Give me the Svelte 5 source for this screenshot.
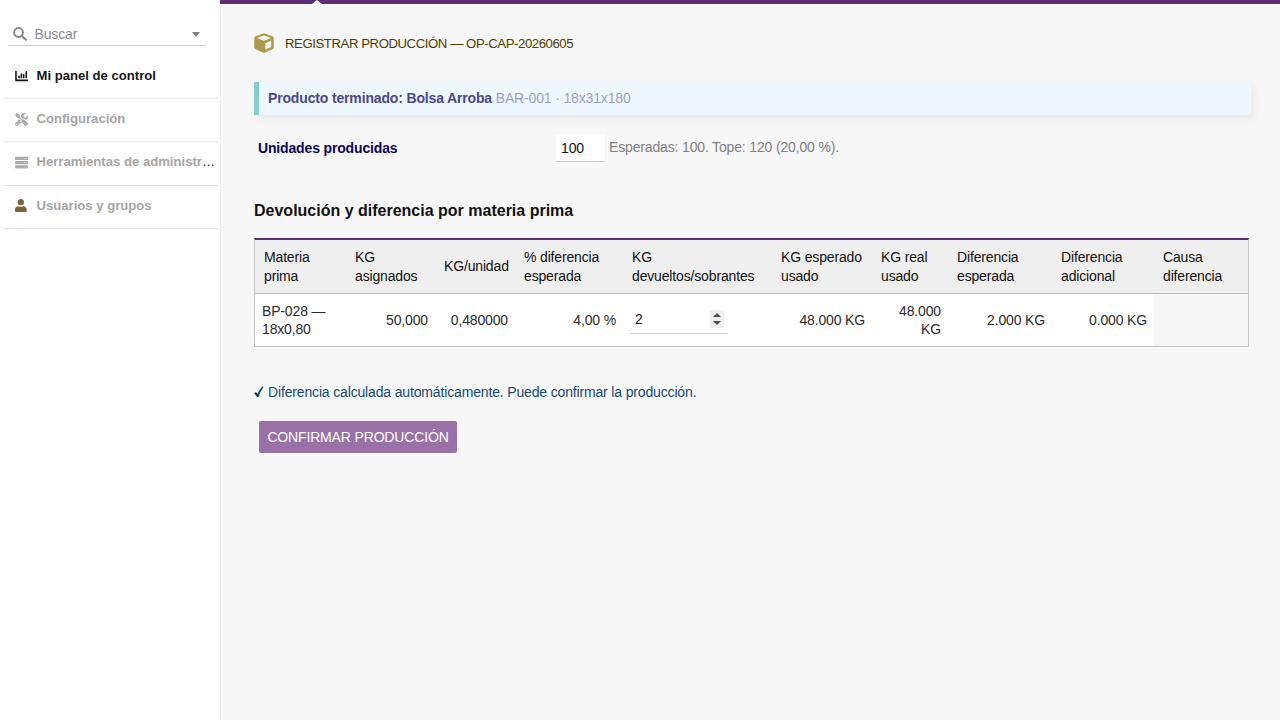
<script lang="ts">
	interface Row {
		material: string;
		asignados: string;
		porUnidad: string;
		porcentaje: string;
		devueltos: string;
		esperado: string;
		real: string;
		difEsperada: string;
		difAdicional: string;
	}

	const menu = [
		{ icon: 'chart', label: 'Mi panel de control' },
		{ icon: 'tools', label: 'Configuración' },
		{ icon: 'server', label: 'Herramientas de administr', more: true },
		{ icon: 'user', label: 'Usuarios y grupos' }
	];

	const columns = [
		'Materia prima',
		'KG asignados',
		'KG/unidad',
		'% diferencia esperada',
		'KG devueltos/sobrantes',
		'KG esperado usado',
		'KG real usado',
		'Diferencia esperada',
		'Diferencia adicional',
		'Causa diferencia'
	];

	let rows: Row[] = $state([
		{
			material: 'BP-028 — 18x0,80',
			asignados: '50,000',
			porUnidad: '0,480000',
			porcentaje: '4,00 %',
			devueltos: '2',
			esperado: '48.000 KG',
			real: '48.000 KG',
			difEsperada: '2.000 KG',
			difAdicional: '0.000 KG'
		}
	]);

	let unidades = $state('100');
	let busqueda = $state('');
	let active = $state('chart');
</script>

<div class="layout">
	<aside class="sidebar">
		<div class="search">
			<svg class="search-icon" viewBox="0 0 14 14">
				<circle cx="5.5" cy="5.5" r="4.400" />
				<path d="M9 9l3.800 3.800" />
			</svg>
			<input class="search-input" placeholder="Buscar" bind:value={busqueda} />
			<span class="caret"></span>
		</div>
		<nav class="menu">
			{#each menu as item}
				<button class="menu-item" class:active={active === item.icon} onclick={() => (active = item.icon)}>
					{#if item.icon === 'chart'}
						<svg class="menu-icon" viewBox="0 0 14 14">
							<path d="M.2 1h1.700v9.300H14v1.900H1.100a.9.9 0 0 1-.9-.9zM3.500 6.300h1.700v2.700H3.500zM6 3.700h1.700V9H6zM8.500 4.700h1.700V9H8.500zM11.300 1H13v8h-1.700z" />
						</svg>
					{:else if item.icon === 'tools'}
						<svg class="menu-icon" viewBox="0 0 512 512">
							<path d="M501.100 395.700L384 278.600c-23.100-23.100-57.600-27.600-85.400-13.900L192 158.100V96L64 0 0 64l96 128h62.100l106.600 106.600c-13.600 27.800-9.200 62.300 13.900 85.400l117.100 117.100c14.600 14.600 38.200 14.600 52.700 0l52.700-52.700c14.500-14.600 14.500-38.200 0-52.700zM331.700 225c28.300 0 54.900 11 74.900 31l19.400 19.400c15.800-6.900 30.800-16.500 43.800-29.500 37.100-37.100 49.700-89.300 37.900-136.700-2.200-9-13.500-12.100-20.100-5.500l-74.400 74.400-67.900-11.300L334 98.900l74.400-74.400c6.600-6.600 3.400-17.900-5.700-20.200-47.400-11.700-99.600.9-136.600 37.900-28.500 28.500-41.900 66.100-41.200 103.600l82.100 82.100c8.100-1.900 16.500-2.900 24.700-2.900zm-103.900 82l-56.700-56.700L18.700 402.800c-25 25-25 65.500 0 90.500s65.500 25 90.500 0l123.600-123.600c-7.600-19.900-9.900-41.600-5-62.700zM64 472c-13.200 0-24-10.800-24-24 0-13.300 10.700-24 24-24s24 10.700 24 24c0 13.200-10.700 24-24 24z" />
						</svg>
					{:else if item.icon === 'server'}
						<svg class="menu-icon" viewBox="0 0 512 512">
							<path fill-rule="evenodd" d="M480 160H32c-17.700 0-32-14.300-32-32V64c0-17.700 14.300-32 32-32h448c17.700 0 32 14.300 32 32v64c0 17.700-14.300 32-32 32zM350 82v28h28V82zm68 0v28h28V82zm62 246H32c-17.700 0-32-14.300-32-32v-72c0-17.700 14.300-32 32-32h448c17.700 0 32 14.300 32 32v72c0 17.700-14.300 32-32 32zM350 246v28h28v-28zm68 0v28h28v-28zm62 242H32c-17.700 0-32-14.300-32-32v-64c0-17.700 14.300-32 32-32h448c17.700 0 32 14.300 32 32v64c0 17.700-14.300 32-32 32zM350 410v28h28v-28zm68 0v28h28v-28z" />
						</svg>
					{:else}
						<svg class="menu-icon user" viewBox="0 0 14 14">
							<circle cx="6.300" cy="3.400" r="3.400" />
							<path d="M0 13v-1.600C0 9.200 1.500 7.800 3.700 7.800c1.600.8 3.600.8 5.200 0 2.200 0 3.700 1.400 3.700 3.600V13c0 .5-.4.900-.9.900H.9A.9.9 0 0 1 0 13z" />
						</svg>
					{/if}
					<span class="menu-text"><span class="menu-label">{item.label}</span>{#if item.more}…{/if}</span>
				</button>
			{/each}
		</nav>
	</aside>

	<main class="content">
		<div class="topbar"><span class="notch"></span></div>

		<header class="title">
			<svg class="box" viewBox="0 0 20 20">
				<path fill-rule="evenodd" d="M10 .3l8.400 2.900c.8.300 1.300.9 1.300 1.700v9.600c0 .7-.4 1.300-1 1.600l-7.900 3.600c-.5.200-1.100.200-1.600 0l-7.900-3.600c-.6-.3-1-.9-1-1.600V4.900c0-.8.500-1.400 1.300-1.700zM10 2.600L3 5v.1l7 2.700 7-2.700V5zM11.300 10.200v6.500l5.900-2.700V7.800z" />
			</svg>
			<h1>REGISTRAR PRODUCCIÓN — OP-CAP-20260605</h1>
		</header>

		<div class="product">
			<strong>Producto terminado: Bolsa Arroba</strong> <span>BAR-001 · 18x31x180</span>
		</div>

		<div class="field">
			<label for="unidades">Unidades producidas</label>
			<input id="unidades" bind:value={unidades} />
			<span class="hint">Esperadas: 100. Tope: 120 (20,00 %).</span>
		</div>

		<h2>Devolución y diferencia por materia prima</h2>

		<table>
			<colgroup>
				<col class="c1" /><col class="c2" /><col class="c3" /><col class="c4" /><col class="c5" />
				<col class="c6" /><col class="c7" /><col class="c8" /><col class="c9" /><col />
			</colgroup>
			<thead>
				<tr>
					{#each columns as column}
						<th>{column}</th>
					{/each}
				</tr>
			</thead>
			<tbody>
				{#each rows as row}
					<tr>
						<td class="left">{row.material}</td>
						<td>{row.asignados}</td>
						<td>{row.porUnidad}</td>
						<td>{row.porcentaje}</td>
						<td class="left">
							<div class="spinner">
								<input bind:value={row.devueltos} />
								<span class="arrows"><i class="up"></i><i class="down"></i></span>
							</div>
						</td>
						<td>{row.esperado}</td>
						<td>{row.real}</td>
						<td>{row.difEsperada}</td>
						<td>{row.difAdicional}</td>
						<td class="empty"></td>
					</tr>
				{/each}
			</tbody>
		</table>

		<p class="status">
			<svg viewBox="0 0 10 12"><path d="M.2 7.300L2 6.100l1.500 2C4.700 5.200 6.300 2.700 8.400.6l1.200.3C7.200 4.100 5.700 7.200 4.500 11H3z" /></svg>
			<span>Diferencia calculada automáticamente. Puede confirmar la producción.</span>
		</p>

		<button class="confirm">CONFIRMAR PRODUCCIÓN</button>
	</main>
</div>

<style>
	:global(body) {
		margin: 0;
		background: #f7f7f7;
	}

	.layout {
		display: flex;
		height: 720px;
		overflow: hidden;
		font-family: 'Liberation Sans', Arial, sans-serif;
		font-size: 14px;
		letter-spacing: -0.155px;
		color: #1b1b1b;
	}

	input,
	button {
		font: inherit;
		letter-spacing: inherit;
		border: 0;
		outline: none;
		padding: 0;
	}

	input {
		box-sizing: border-box;
		min-width: 0;
	}

	.sidebar {
		box-sizing: border-box;
		width: 221px;
		flex: none;
		border-right: 1px solid #f0f0f0;
		background: #fff;
	}

	.search {
		box-sizing: border-box;
		display: flex;
		align-items: center;
		width: 198px;
		height: 24px;
		margin: 22px 0 0 8px;
		padding: 0 6px 0 5px;
		border-bottom: 1px solid #ccc;
	}

	.search-icon {
		width: 14px;
		height: 14px;
		fill: none;
		stroke: #858585;
		stroke-width: 2;
		stroke-linecap: round;
	}

	.search-input {
		flex: 1;
		margin-left: 7.500px;
		background: none;
	}

	.search-input::placeholder {
		color: #8c8c8c;
		opacity: 1;
	}

	.caret {
		margin-top: 1px;
		border: 4px solid transparent;
		border-top: 5px solid #808080;
		border-bottom: 0;
	}

	.menu {
		display: flex;
		flex-direction: column;
		margin: 10px 2px 0 4px;
	}

	.menu-item {
		box-sizing: border-box;
		display: flex;
		align-items: center;
		height: 43px;
		padding: 0 2px 2px 11px;
		border-bottom: 1px solid #e5e5e5;
		background: none;
		color: #111;
		font-size: 13.120px;
		letter-spacing: 0;
		text-align: left;
	}

	.menu-item:nth-child(n + 3) {
		height: 43.500px;
	}

	.menu-icon {
		flex: none;
		width: 13px;
		height: 13px;
		margin-right: 8.500px;
		fill: #aaa;
	}

	.menu-icon.user {
		fill: #7d633c;
	}

	.menu-text {
		white-space: nowrap;
		line-height: 18px;
	}

	.menu-label {
		color: #a5a5a5;
		font-weight: bold;
	}

	.active .menu-label {
		color: #151515;
	}

	.active .menu-icon {
		fill: #151515;
	}

	.content {
		flex: 1;
		min-width: 0;
		background: #f7f7f7;
	}

	.topbar {
		height: 4px;
		margin-left: -1px;
		border-bottom: 1px solid #fff;
		background: #5a2d76;
	}

	.notch {
		display: block;
		width: 0;
		margin-left: 92px;
		border: 5px solid transparent;
		border-top: 0;
		border-bottom: 4px solid #fff;
	}

	.title {
		display: flex;
		align-items: center;
		height: 20px;
		margin: 28px 0 0 33px;
	}

	.box {
		width: 20px;
		height: 20px;
		fill: #aa9a4a;
	}

	h1 {
		margin: 0 0 0 11px;
		color: #4d3e00;
		font-size: 13.200px;
		font-weight: normal;
		letter-spacing: -0.440px;
	}

	.product {
		box-sizing: border-box;
		width: 997px;
		height: 33px;
		margin: 29px 0 0 33px;
		padding-left: 9px;
		border-left: 5px solid #82cfce;
		background: #eef7fe;
		box-shadow: 3px 4px 8px rgba(0, 0, 0, 0.06);
		line-height: 33px;
		color: #a0a0c2;
	}

	.product strong {
		color: #4c4886;
	}

	.field {
		display: flex;
		align-items: center;
		height: 28px;
		margin: 19px 0 0 37px;
	}

	.field label {
		width: 298px;
		color: #0b0758;
		font-weight: bold;
	}

	.field input {
		width: 49px;
		height: 28px;
		padding: 0 5px;
		border-bottom: 1px solid #ccc;
		background: #fff;
		color: #111;
	}

	.hint {
		margin: 0 0 2px 4px;
		color: #808080;
	}

	h2 {
		margin: 39px 0 0 33px;
		color: #111;
		font-size: 16px;
		letter-spacing: 0;
		line-height: 20px;
	}

	table {
		width: 995px;
		margin: 17px 0 0 33px;
		table-layout: fixed;
		border: 1px solid #c4c4c4;
		border-top: 2px solid #5a2d76;
		border-spacing: 0;
		line-height: 18.500px;
	}

	.c1 { width: 91px; }
	.c2 { width: 89px; }
	.c3 { width: 80px; }
	.c4 { width: 108px; }
	.c5 { width: 149px; }
	.c6 { width: 100px; }
	.c7 { width: 76px; }
	.c8 { width: 104px; }
	.c9 { width: 102px; }

	th {
		box-sizing: border-box;
		height: 54px;
		padding: 0 5px 0 9px;
		border-bottom: 1px solid #bdbdbd;
		background: #efefef;
		color: #111;
		font-weight: normal;
		text-align: left;
	}

	td {
		box-sizing: border-box;
		height: 52px;
		padding: 0 7px;
		background: #fff;
		color: #2b2b2b;
		text-align: right;
	}

	td.left {
		text-align: left;
	}

	td.empty {
		background: #f7f7f7;
	}

	.spinner {
		box-sizing: border-box;
		display: flex;
		align-items: center;
		width: 98px;
		height: 28px;
		margin-top: -1px;
		padding: 0 4px 0 5px;
		border-bottom: 1px solid #ccc;
	}

	.spinner input {
		flex: 1;
		color: #111;
	}

	.arrows {
		display: flex;
		flex-direction: column;
		align-items: center;
		justify-content: center;
		gap: 4px;
		width: 14px;
		height: 18px;
		background: #efefef;
	}

	.up,
	.down {
		border: 4px solid transparent;
	}

	.up {
		border-top: 0;
		border-bottom: 4px solid #505050;
	}

	.down {
		border-bottom: 0;
		border-top: 4px solid #505050;
	}

	.status {
		display: flex;
		align-items: center;
		height: 18px;
		margin: 36px 0 0 33px;
		color: #174a6e;
	}

	.status svg {
		width: 10px;
		height: 12px;
		margin-right: 4px;
		fill: #123c5c;
	}

	.confirm {
		display: block;
		width: 198px;
		height: 32px;
		margin: 20px 0 0 38px;
		border-radius: 2px;
		background: #9a71a6;
		color: #fff;
	}
</style>
